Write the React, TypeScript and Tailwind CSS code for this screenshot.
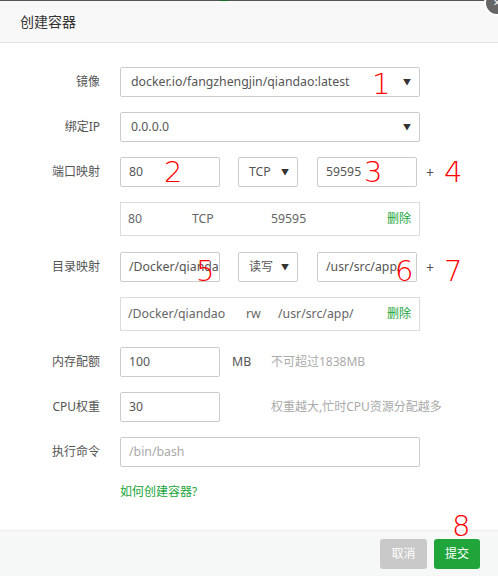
import React from 'react';

const FONT = { fontFamily: '"Noto Sans", "Noto Sans CJK SC", sans-serif' };

const Caret = () => <span className="text-[8px] text-[#333] leading-none">▼</span>;

const Label = ({ children }: { children: React.ReactNode }) => (
  <div className="w-[100px] shrink-0 text-right text-[12px] text-[#555]">{children}</div>
);

const Box = ({ className = '', children }: { className?: string; children?: React.ReactNode }) => (
  <div className={`h-[30px] border border-[#ccc] rounded-[2px] flex items-center px-[8px] text-[12.3px] text-[#555] overflow-hidden whitespace-nowrap ${className}`}>
    {children}
  </div>
);

const Mark = ({ n, className }: { n: string; className: string }) => (
  <span className={`absolute text-[29px] leading-none text-[#f00] ${className}`} style={{ fontFamily: '"DejaVu Sans", sans-serif', fontWeight: 200 }}>{n}</span>
);

export default function App() {
  return (
    <div className="relative w-[498px] h-[576px] bg-white overflow-hidden" style={FONT}>
      {/* page edge behind dialog */}
      <div className="h-px bg-[#555] flex">
        <div className="ml-[219px] w-[10px] bg-[#1a6b2a]" />
      </div>

      <div className="h-[42px] bg-[#f8f8f8] border-b border-[#e5e5e5] flex items-center pl-[20px] text-[14px] text-[#333]">创建容器</div>

      <div className="pt-[24px] pr-[20px]">
        <div className="flex items-center mb-[15px]">
          <Label>镜像</Label>
          <Box className="ml-[20px] w-[300px] justify-between pl-[10px]">
            <span>docker.io/fangzhengjin/qiandao:latest</span>
            <Caret />
          </Box>
        </div>

        <div className="flex items-center mb-[15px]">
          <Label>绑定IP</Label>
          <Box className="ml-[20px] w-[300px] justify-between pl-[10px]">
            <span>0.0.0.0</span>
            <Caret />
          </Box>
        </div>

        <div className="flex items-center mb-[15px]">
          <Label>端口映射</Label>
          <Box className="ml-[20px] w-[100px]">80</Box>
          <Box className="ml-[18px] w-[60px] justify-between pl-[10px]">
            <span>TCP</span>
            <Caret />
          </Box>
          <Box className="ml-[19px] w-[100px]">59595</Box>
          <span className="ml-[9px] text-[14px] text-[#555]">+</span>
        </div>

        <div className="ml-[120px] w-[300px] h-[34px] border border-[#ddd] flex items-center text-[12.3px] text-[#666] mb-[16px]">
          <span className="ml-[7px] w-[64px]">80</span>
          <span className="w-[79px]">TCP</span>
          <span className="flex-1">59595</span>
          <span className="mr-[8px] text-[12px] text-[#20a53a]">删除</span>
        </div>

        <div className="flex items-center mb-[15px]">
          <Label>目录映射</Label>
          <Box className="ml-[20px] w-[100px] px-[6px]">/Docker/qiandao</Box>
          <Box className="ml-[18px] w-[60px] justify-between pl-[10px]">
            <span className="text-[12px]">读写</span>
            <Caret />
          </Box>
          <Box className="ml-[19px] w-[100px] px-[6px]">/usr/src/app/</Box>
          <span className="ml-[9px] text-[14px] text-[#555]">+</span>
        </div>

        <div className="ml-[120px] w-[300px] h-[34px] border border-[#ddd] flex items-center text-[12.3px] text-[#666] mb-[16px]">
          <span className="ml-[7px] w-[118px]">/Docker/qiandao</span>
          <span className="w-[32px]">rw</span>
          <span className="flex-1">/usr/src/app/</span>
          <span className="mr-[8px] text-[12px] text-[#20a53a]">删除</span>
        </div>

        <div className="flex items-center mb-[15px]">
          <Label>内存配额</Label>
          <Box className="ml-[20px] w-[100px]">100</Box>
          <span className="ml-[12px] w-[39px] text-[12.3px] text-[#555]">MB</span>
          <span className="text-[12px] text-[#aaa]">不可超过1838MB</span>
        </div>

        <div className="flex items-center mb-[15px]">
          <Label>CPU权重</Label>
          <Box className="ml-[20px] w-[100px]">30</Box>
          <span className="ml-[51px] text-[12px] text-[#aaa]">权重越大,忙时CPU资源分配越多</span>
        </div>

        <div className="flex items-center mb-[15px]">
          <Label>执行命令</Label>
          <Box className="ml-[20px] w-[300px] text-[#aaa]">/bin/bash</Box>
        </div>

        <div className="ml-[120px] text-[12px] text-[#20a53a] leading-[20px]">如何创建容器?</div>
      </div>

      <div className="absolute left-0 right-0 bottom-0 h-[46px] bg-[#f6f8f8] border-t border-[#eee] flex items-center justify-end gap-[7px] pr-[18px]">
        <button className="w-[47px] h-[30px] rounded-[3px] bg-[#c9c9c9] text-white text-[12px]">取消</button>
        <button className="w-[46px] h-[30px] rounded-[3px] bg-[#20a53a] text-white text-[12px]">提交</button>
      </div>

      {/* close button, cut off at the corner */}
      <div className="absolute -right-[12px] -top-[10px] w-[26px] h-[26px] rounded-full bg-[#666] border-2 border-white flex items-center justify-center text-white text-[12px]">×</div>

      {/* red annotations */}
      <Mark n="1" className="left-[372px] top-[70px]" />
      <Mark n="2" className="left-[164px] top-[158px]" />
      <Mark n="3" className="left-[364px] top-[158px]" />
      <Mark n="4" className="left-[444px] top-[158px]" />
      <Mark n="5" className="left-[196px] top-[257px]" />
      <Mark n="6" className="left-[395px] top-[257px]" />
      <Mark n="7" className="left-[444px] top-[257px]" />
      <Mark n="8" className="left-[452px] top-[512px]" />
    </div>
  );
}
